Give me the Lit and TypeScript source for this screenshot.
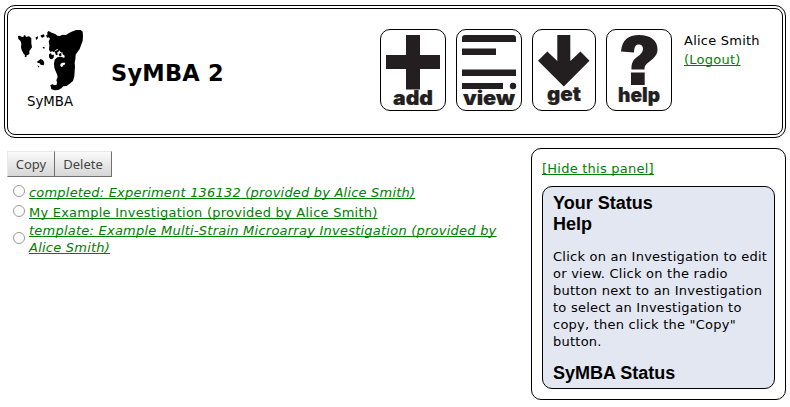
import { LitElement, html, css, svg } from "lit";
import { customElement, property } from "lit/decorators.js";

@customElement("symba-logo")
export class SymbaLogo extends LitElement {
  static styles = css`
    :host { display: block; width: 80px; height: 90px; }
    svg { display: block; }
    text { font: 13.3px "DejaVu Sans", sans-serif; }
  `;
  render() {
    return html`<svg width="80" height="90" viewBox="0 0 80 90">
      <g transform="scale(.33333)">
        <path d="M24 42L30 41L34 44L40 45L42 39L47 41L48 45L57 43L64 48L64 64L66 76L61 83L58 87L58 95L54 99L50 100L49 106L44 104L45 99L41 96L38 90L35 84L33 76L34 65L31 56L25 51Z"/>
        <path d="M112 31L116 27L125 32L136 36L142 41L149 42L158 38L168 39L176 34L185 29L198 24L212 24L218 29L219 42L218 57L213 70L209 81L201 92L197 98L196 112L194 122L195 134L194 147L193 163L189 177L178 186L170 192L160 193L154 199L145 204L132 205L124 201L121 190L127 187L133 190L140 188L141 181L139 174L143 166L141 157L137 148L133 137L132 125L134 113L142 106L153 104L163 108L164 101L158 97L157 90L152 83L147 87L142 81L137 84L132 91L127 88L121 90L117 83L118 70L116 58L120 50L112 40Z"/>
        <path fill="#fff" d="M151 126L157 122L166 122L164 128L160 130L156 136L151 132Z"/>
        <path d="M117 97L123 93L125 99L132 98L131 107L126 112L120 110L117 105ZM134 88L145 83L148 88L142 90L143 98L138 100ZM146 96L154 92L154 102L148 103ZM149 82L156 84L157 92L151 90ZM77 46L84 43L83 50L78 54ZM92 40L102 37L104 43L98 47L93 45ZM108 40L117 39L118 46L111 47ZM98 75L104 75L103 80L99 79ZM82 118L88 115L91 111L99 114L103 122L101 130L93 129L88 123L82 122ZM82 130L88 133L86 137Z"/>
      </g>
      <text x="17" y="83.500">SyMBA</text>
    </svg>`;
  }
}

const glyphs = {
  add: svg`<path d="M26 6h14v20h20v14H40v20.500H26V40H6V26h20z"/><text x="13" y="75.500" textLength="40" lengthAdjust="spacingAndGlyphs">add</text>`,
  view: svg`<path d="M6 13V9q0-3 3-3h48q3 0 3 3v4zM6 19.500h34V26H6zM6 40.500h54V47H6zM6 54h41v6H6z"/><circle cx="57" cy="57" r="3.200"/><text x="7" y="75.500" textLength="52" lengthAdjust="spacingAndGlyphs">view</text>`,
  get: svg`<path d="M25.300 6h13v26L48.500 22.500l9 9.300L31.800 57.500L6 31.800l9.300-9.300L25.300 32z"/><text x="15" y="72.300" textLength="34" lengthAdjust="spacingAndGlyphs">get</text>`,
  help: svg`<path d="M15 22.500C16 11 22 6 33 6C44 6 51.500 11 51.500 20.500C51.500 26 48 29 43 33C39 36 38.500 37.500 38.500 40.500H25.500C25.300 34 27 31 31 28C35 25 37 23 37 20C37 17 35.500 15.500 33 15.500C29.500 15.500 28.200 18 28 23.500ZM25 43.500h13.700V56H25z"/><text x="12" y="73" textLength="42" lengthAdjust="spacingAndGlyphs">help</text>`,
};

@customElement("action-tile")
export class ActionTile extends LitElement {
  @property() kind: keyof typeof glyphs = "add";
  static styles = css`
    :host { display: block; box-sizing: border-box; width: 66px; height: 82px; border: 1px solid #000; border-radius: 10px; }
    :host([kind="get"]) { width: 64px; }
    svg { display: block; margin: -1px; fill: #231f20; overflow: visible; }
    text { font: 900 19.5px Inter, sans-serif; stroke: #231f20; stroke-width: .2px; }
  `;
  render() {
    return html`<svg width="66" height="82" viewBox="0 0 66 82">${glyphs[this.kind]}</svg>`;
  }
}

const investigations = [
  { title: "completed: Experiment 136132 (provided by Alice Smith)", kind: "special first" },
  { title: "My Example Investigation (provided by Alice Smith)", kind: "second" },
  { title: "template: Example Multi-Strain Microarray Investigation (provided by Alice Smith)", kind: "special third" },
];

@customElement("app-root")
export class AppRoot extends LitElement {
  static styles = css`
    :host { display: block; box-sizing: border-box; height: 407px; overflow: hidden; padding: 5px 4px 0; background: #fff; color: #000; font: 13px/17px "DejaVu Sans", sans-serif; letter-spacing: .235px; }
    * { box-sizing: border-box; }
    a { color: #008000; text-decoration: underline; text-underline-offset: 1px; text-decoration-thickness: 1px; text-decoration-skip-ink: none; }
    header { display: flex; align-items: flex-start; height: 133px; border: 4px double #000; border-radius: 11px; }
    symba-logo { margin: 13px 0 0 2px; letter-spacing: 0; }
    h1 { margin: 51px 0 0 21px; width: 269px; font-size: 22.5px; line-height: 26px; white-space: nowrap; }
    nav { display: flex; gap: 10px; margin: 20px 0 0; letter-spacing: 0; }
    .user { margin: 22px 0 0 12px; line-height: 19px; white-space: nowrap; }
    .body { display: flex; justify-content: space-between; margin-top: 10px; }
    main { width: 510px; padding: 3px 0 0 3px; }
    .buttons { display: flex; }
    button { height: 26px; padding: 0; border: 1px solid #bbb; border-width: 1px 1px 1px 0; border-color: #e8e8e8 #707070 #707070; background: linear-gradient(#fafafa, #d6d6d6); color: #444; font: 13px/22px "Noto Sans", sans-serif; }
    .copy { width: 48px; border-left: 1px solid #e8e8e8; }
    .delete { width: 57px; }
    ul { list-style: none; margin: 5px 0 0; padding: 0 0 0 6px; }
    li { display: flex; align-items: center; gap: 4px; white-space: nowrap; }
    .special a { font-style: italic; }
    .first { height: 20px; }
    .second { height: 20px; }
    .third { height: 34px; }
    .third a { white-space: normal; width: 480px; }
    .first a { letter-spacing: .2px; }
    input { appearance: none; flex: none; width: 12px; height: 12px; margin: 0; border: 1px solid #999; border-radius: 50%; background: #fff; }
    .first input, .second input { margin-bottom: 3px; }
    .third input { margin-bottom: 2px; }
    aside { width: 255px; height: 252px; padding: 11px 10px 10px; border: 1px solid #000; border-radius: 10px; }
    .hide { display: block; width: max-content; }
    .status { height: 203px; margin-top: 9px; padding: 6px 0 0 10px; border: 1px solid #000; border-radius: 10px; background: #e3e7f2; white-space: nowrap; }
    h2 { margin: 0; font: bold 18px/21px "Liberation Sans", sans-serif; letter-spacing: 0; }
    p { margin: 13px 0 13px; }
  `;
  render() {
    return html`
      <header>
        <symba-logo></symba-logo>
        <h1>SyMBA 2</h1>
        <nav>
          <action-tile kind="add"></action-tile>
          <action-tile kind="view"></action-tile>
          <action-tile kind="get"></action-tile>
          <action-tile kind="help"></action-tile>
        </nav>
        <div class="user">Alice Smith<br /><a>(Logout)</a></div>
      </header>
      <div class="body">
        <main>
          <div class="buttons"><button class="copy">Copy</button><button class="delete">Delete</button></div>
          <ul>
            ${investigations.map((i) => html`<li class=${i.kind}><input type="radio" name="investigation" /><a>${i.title}</a></li>`)}
          </ul>
        </main>
        <aside>
          <a class="hide">[Hide this panel]</a>
          <section class="status">
            <h2>Your Status</h2>
            <h2>Help</h2>
            <p>Click on an Investigation to edit<br />or view. Click on the radio<br />button next to an Investigation<br />to select an Investigation to<br />copy, then click the "Copy"<br />button.</p>
            <h2>SyMBA Status</h2>
          </section>
        </aside>
      </div>`;
  }
}
